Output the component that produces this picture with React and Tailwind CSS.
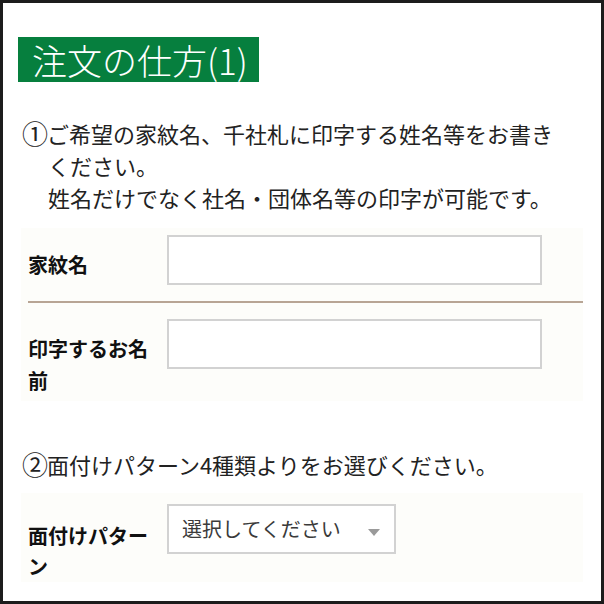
const jp = { fontFamily: '"Noto Sans CJK JP", "Noto Sans", sans-serif' };

const FieldRow = ({ label, children, className = "" }) => (
  <div className={`flex items-start pl-[7px] ${className}`}>
    <div className="w-[139px] shrink-0 pr-[8px] pt-[14px] text-[20px] leading-[32px] font-bold text-[#111]">
      {label}
    </div>
    {children}
  </div>
);

const TextInput = () => (
  <input
    type="text"
    className="w-[375px] h-[50px] border-2 border-[#d2d2d2] bg-white px-3 outline-none"
  />
);

// circled step number, a little larger than the body text
const Step = ({ n }) => (
  <span className="inline-block w-[25px] indent-0 text-[26px] leading-[20px] align-[-1px] -ml-[1px]">
    {n}
  </span>
);

export default function App() {
  return (
    <div
      className="w-[604px] h-[604px] border-[3px] border-[#1c1c1c] bg-white text-[#222] overflow-hidden"
      style={jp}
    >
      {/* title bar */}
      <div className="mt-[34px] ml-[15px] w-[241px] h-[45px] bg-[#067f3e] pl-[14px] flex items-center">
        <span className="text-[35px] leading-none font-light text-white whitespace-nowrap">
          注文の仕方(1)
        </span>
      </div>

      <p className="mt-[35px] ml-[20px] w-[547px] pl-[25px] -indent-[25px] text-[22px] leading-[32px]">
        <Step n="①" />
        ご希望の家紋名、千社札に印字する姓名等をお書きください。
        <br />
        姓名だけでなく社名・団体名等の印字が可能です。
      </p>

      {/* name fields */}
      <div className="mt-[15px] ml-[18px] w-[562px] bg-[#fdfdfa] pt-[7px] pb-[4px]">
        <FieldRow label="家紋名" className="pb-[16px]">
          <TextInput />
        </FieldRow>
        <div className="ml-[7px] h-[2px] bg-[#b8a595]" />
        <FieldRow label="印字するお名前" className="pt-[16px]">
          <TextInput />
        </FieldRow>
      </div>

      <p className="mt-[47px] ml-[20px] text-[22px] leading-[32px]">
        <Step n="②" />
        面付けパターン4種類よりをお選びください。
      </p>

      {/* pattern select */}
      <div className="mt-[13px] ml-[18px] w-[562px] bg-[#fdfdfa] pt-[11px]">
        <div className="flex items-start pl-[7px]">
          <div className="w-[139px] shrink-0 pr-[8px] pt-[16px] text-[20px] leading-[31px] font-bold text-[#111]">
            面付けパターン
          </div>
          <div className="relative w-[229px] h-[50px] border-2 border-[#d2d2d2] bg-white flex items-center pl-[13px]">
            <span className="text-[20px] text-[#3a3a3a]">選択してください</span>
            <svg
              className="absolute right-[14px] top-[23px]"
              width="12"
              height="7"
              viewBox="0 0 12 7"
            >
              <polygon points="0,0 12,0 6,7" fill="#9a9a9a" />
            </svg>
          </div>
        </div>
      </div>
    </div>
  );
}
